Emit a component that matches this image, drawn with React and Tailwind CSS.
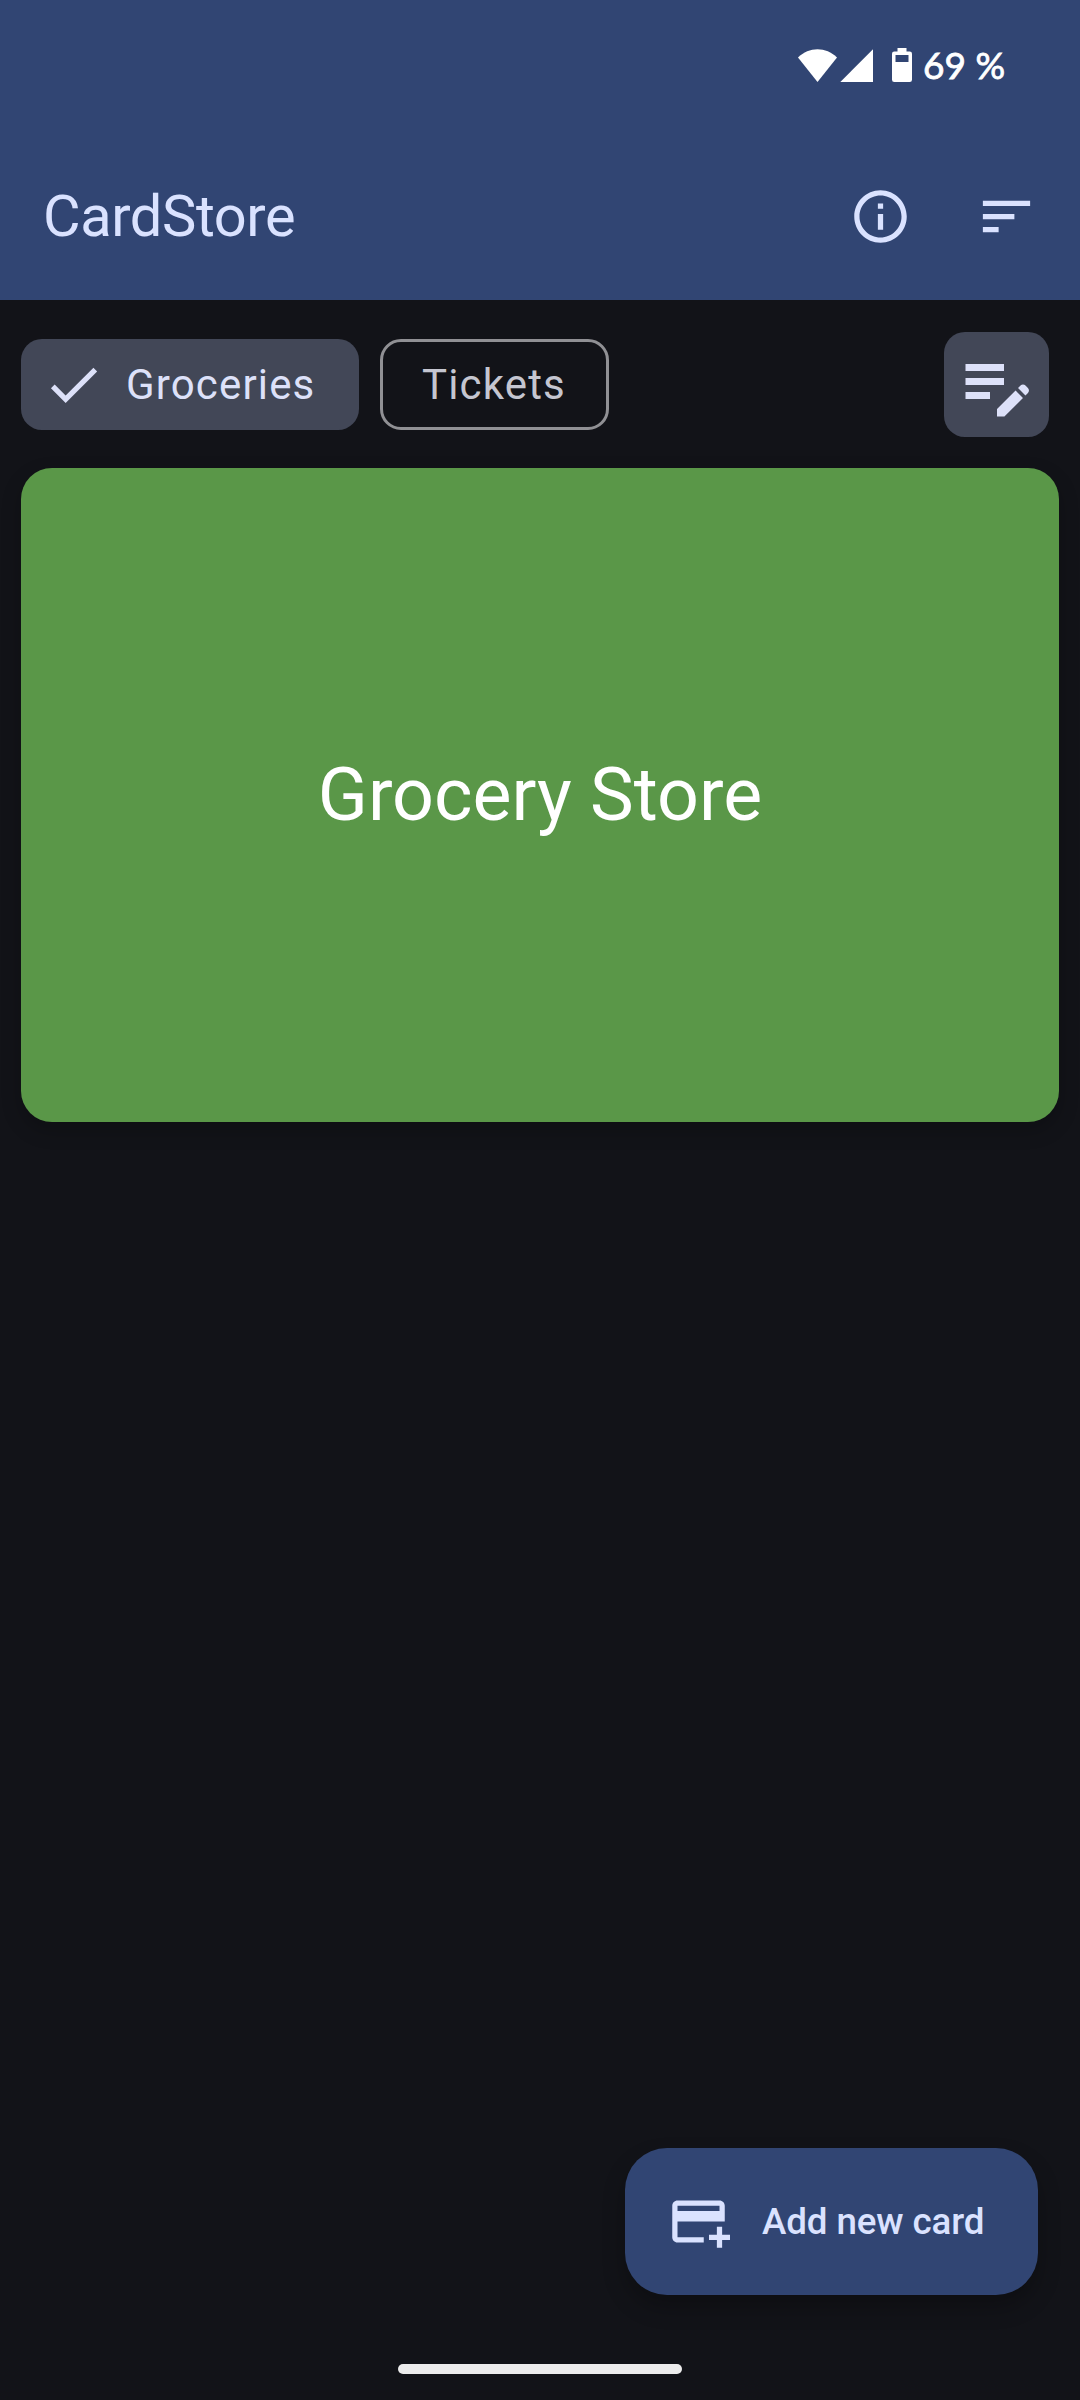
function StatusBar() {
  return (
    <div className="flex h-[130px] items-start justify-end pr-[75px] text-white">
      <svg className="mt-[46px] h-[40px] w-[120px] shrink-0" viewBox="0 0 120 40" fill="currentColor">
        <path d="M2 11.5C13 0.5 30 0.5 41 11.5L21.5 36Z" />
        <path d="M77 3.3V36H44.3Z" />
        <path
          fillRule="evenodd"
          d="M101.5 2h9v3.5h3.2q2.3 0 2.3 2.3v25.9q0 2.3-2.3 2.3h-15.4q-2.3 0-2.3-2.3v-25.9q0-2.3 2.3-2.3h3.2ZM99.5 9v7h13v-7Z"
        />
      </svg>
      <span className="mt-[43px] ml-[7px] w-[82px] font-['Lato'] text-[37px] leading-[44px] whitespace-nowrap [-webkit-text-stroke:0.8px_white]">
        69 %
      </span>
    </div>
  );
}

function Icon({ path, className }) {
  return (
    <svg className={`shrink-0 ${className}`} viewBox="0 0 24 24" fill="currentColor">
      <path d={path} />
    </svg>
  );
}

const icons = {
  info: "M11 7h2v2h-2zm0 4h2v6h-2zm1-9C6.48 2 2 6.48 2 12s4.48 10 10 10 10-4.48 10-10S17.52 2 12 2zm0 18c-4.41 0-8-3.59-8-8s3.59-8 8-8 8 3.59 8 8-3.59 8-8 8z",
  sort: "M3 18h6v-2H3v2zM3 6v2h18V6H3zm0 7h12v-2H3v2z",
  check: "M9 16.17 4.83 12l-1.42 1.41L9 19 21 7l-1.41-1.41z",
  editNote:
    "M3 10h11v2H3v-2zm0-2h11V6H3v2zm0 8h7v-2H3v2zm15.01-3.13.71-.71c.39-.39 1.02-.39 1.41 0l.71.71c.39.39.39 1.02 0 1.41l-.71.71-2.12-2.12zm-.71.71-5.3 5.3V21h2.12l5.3-5.3-2.12-2.12z",
  addCard:
    "M20 4H4c-1.11 0-1.99.89-1.99 2L2 18c0 1.11.89 2 2 2h10v-2H4v-6h18V6c0-1.11-.89-2-2-2zm0 4H4V6h16v2zm4 9v2h-3v3h-2v-3h-3v-2h3v-3h2v3h3z",
};

export default function App() {
  return (
    <div className="flex h-[2400px] w-[1080px] flex-col bg-[#121318] font-['Roboto',sans-serif] text-[#dae2ff]">
      <header className="h-[300px] bg-[#314573]">
        <StatusBar />
        <div className="flex h-[173px] items-center pr-[42px] pl-[43px]">
          <h1 className="flex-1 pb-[2px] text-[57.75px] leading-[74px] font-normal tracking-[-0.4px]">CardStore</h1>
          <button className="mr-[63px] flex">
            <Icon path={icons.info} className="size-[63px]" />
          </button>
          <button className="flex">
            <Icon path={icons.sort} className="size-[63px]" />
          </button>
        </div>
      </header>

      <main className="flex flex-1 flex-col px-[21px]">
        <div className="mt-[32px] flex h-[105px] items-center pr-[10px]">
          <button className="flex h-[91px] w-[338px] items-center rounded-[21px] bg-[#424757] pl-[21px] text-[#dde1f9]">
            <Icon path={icons.check} className="size-[63px]" />
            <span className="ml-[21px] text-[42px] tracking-[1.15px]">Groceries</span>
          </button>
          <button className="ml-[21px] flex h-[91px] w-[229px] items-center rounded-[21px] border-3 border-[#909094] pl-[39px] text-[#c5c6d0]">
            <span className="text-[42px] tracking-[1.15px]">Tickets</span>
          </button>
          <button className="ml-auto flex size-[105px] items-center justify-center rounded-[21px] bg-[#424757] text-[#dde1f9]">
            <Icon path={icons.editNote} className="size-[84px]" />
          </button>
        </div>

        <div className="mt-[31px] flex h-[654px] items-center justify-center rounded-[31px] bg-[#5a9748] text-[73.5px] text-white shadow-[0_8px_20px_rgba(0,0,0,0.22)]">
          Grocery Store
        </div>

        <button className="mt-auto mr-[21px] mb-[69px] flex h-[147px] w-[413px] items-center self-end rounded-[42px] bg-[#314573] pl-[42px] shadow-[0_12px_22px_rgba(0,0,0,0.25)]">
          <Icon path={icons.addCard} className="size-[63px]" />
          <span className="ml-[32px] text-[36.75px] font-medium tracking-[-0.12px] whitespace-nowrap">
            Add new card
          </span>
        </button>
      </main>

      <div className="mb-[26px] h-[10px] w-[284px] self-center rounded-full bg-[#ececec]" />
    </div>
  );
}
